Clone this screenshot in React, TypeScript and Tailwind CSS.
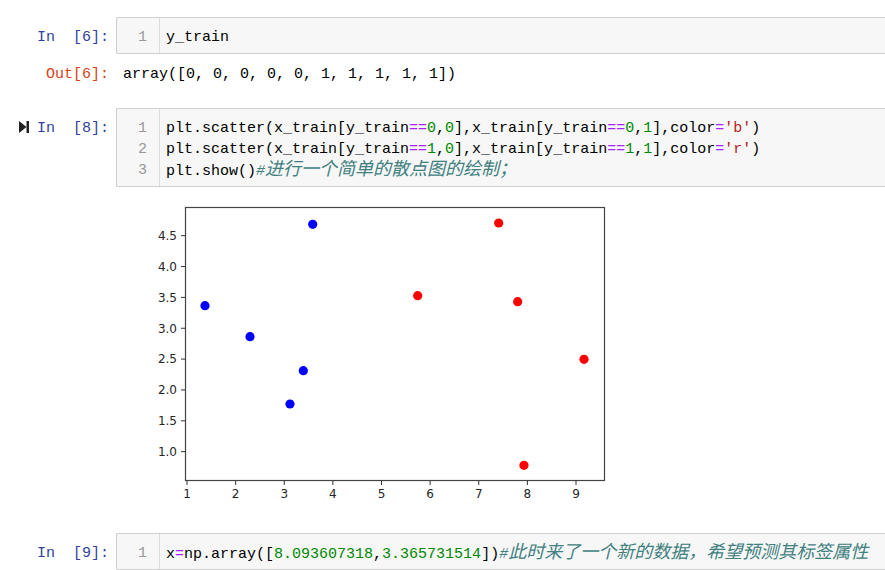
import React from 'react';

// token colours used by the notebook's code highlighter
const OP = 'text-[#aa22ff]';
const NUM = 'text-[#008800]';
const STR = 'text-[#ba2121]';

type Tok = [string, string?];

const Code: React.FC<{ toks: Tok[]; comment?: string }> = ({ toks, comment }) => (
  <div className="h-[21px] leading-[21px] whitespace-pre">
    {toks.map(([t, c], i) => (
      <span key={i} className={c}>{t}</span>
    ))}
    {comment && (
      <span className="italic text-[#408080]">
        #<span className="text-[18px] leading-[21px]">{comment}</span>
      </span>
    )}
  </div>
);

const Prompt: React.FC<{ label: string; out?: boolean; running?: boolean }> = ({ label, out, running }) => (
  <div className="w-[116px] shrink-0 flex items-start pr-[7px]">
    {running && (
      <svg width="12" height="14" viewBox="0 0 12 14" className="ml-[18px] mt-[2px]">
        <path d="M1 1 L8.5 7 L1 13 Z" fill="#222" />
        <rect x="8.5" y="1" width="2.5" height="12" fill="#222" />
      </svg>
    )}
    <span className={`ml-auto h-[21px] leading-[21px] whitespace-pre ${out ? 'text-[#d84315]' : 'text-[#303f9f]'}`}>
      {label}
    </span>
  </div>
);

const CodeCell: React.FC<{ n: number; lines: { toks: Tok[]; comment?: string }[]; running?: boolean }> = ({ n, lines, running }) => (
  <div className="flex">
    <div className="pt-[10px] flex">
      <Prompt label={`In  [${n}]:`} running={running} />
    </div>
    <div className="flex flex-1 border border-r-0 border-[#cfcfcf] bg-[#f7f7f7] rounded-l-[2px]">
      <div className="w-[43px] shrink-0 border-r border-[#dddddd] pt-[9px] pb-[5px] pr-[12px] text-right text-[#999999]">
        {lines.map((_, i) => (
          <div key={i} className="h-[21px] leading-[21px]">{i + 1}</div>
        ))}
      </div>
      <div className="pt-[9px] pb-[5px] pl-[6px] text-black">
        {lines.map((l, i) => (
          <Code key={i} toks={l.toks} comment={l.comment} />
        ))}
      </div>
    </div>
  </div>
);

// scatter data read off the figure
const blue = [
  [1.37, 3.366], [2.296, 2.863], [3.392, 2.312], [3.118, 1.772], [3.585, 4.685],
];
const red = [
  [5.744, 3.528], [7.41, 4.706], [7.8, 3.43], [9.165, 2.497], [7.93, 0.779],
];

const px = (v: number) => 47 + (v - 1) * 48.625;
const py = (v: number) => 35.7 + (4.5 - v) * 61.7;

const Scatter: React.FC = () => {
  const xt = [1, 2, 3, 4, 5, 6, 7, 8, 9];
  const yt = [1.0, 1.5, 2.0, 2.5, 3.0, 3.5, 4.0, 4.5];
  return (
    <svg width="480" height="300" viewBox="0 0 480 300" className="block">
      <rect x="0" y="0" width="480" height="300" fill="#fff" />
      {blue.map(([x, y], i) => (
        <circle key={`b${i}`} cx={px(x)} cy={py(y)} r="4.6" fill="#0000ff" />
      ))}
      {red.map(([x, y], i) => (
        <circle key={`r${i}`} cx={px(x)} cy={py(y)} r="4.6" fill="#ff0000" />
      ))}
      <rect x="45.5" y="7.5" width="419" height="273" fill="none" stroke="#444" strokeWidth="1.2" />
      <g fontFamily="'DejaVu Sans', sans-serif" fontSize="12" fill="#262626">
        {xt.map(v => (
          <g key={`x${v}`}>
            <line x1={px(v)} x2={px(v)} y1="280.5" y2="285" stroke="#333" strokeWidth="1" />
            <text x={px(v)} y="298" textAnchor="middle">{v}</text>
          </g>
        ))}
        {yt.map(v => (
          <g key={`y${v}`}>
            <line x1="41" x2="45.5" y1={py(v)} y2={py(v)} stroke="#333" strokeWidth="1" />
            <text x="37" y={py(v) + 4.3} textAnchor="end">{v.toFixed(1)}</text>
          </g>
        ))}
      </g>
    </svg>
  );
};

export default function App() {
  return (
    <div className="w-[885px] h-[570px] overflow-hidden bg-white text-[15px] font-['Liberation_Mono','Noto_Sans_CJK_SC',monospace]">
      <div className="pt-[17px]">
        <CodeCell n={6} lines={[{ toks: [['y_train']] }]} />

        <div className="flex mt-[10px]">
          <Prompt label="Out[6]:" out />
          <div className="pl-[7px] h-[21px] leading-[21px] whitespace-pre text-black">
            array([0, 0, 0, 0, 0, 1, 1, 1, 1, 1])
          </div>
        </div>

        <div className="mt-[23px]">
          <CodeCell
            n={8}
            running
            lines={[
              {
                toks: [
                  ['plt.scatter(x_train[y_train'], ['==', OP], ['0', NUM], [','], ['0', NUM],
                  ['],x_train[y_train'], ['==', OP], ['0', NUM], [','], ['1', NUM],
                  ['],color'], ['=', OP], ["'b'", STR], [')'],
                ],
              },
              {
                toks: [
                  ['plt.scatter(x_train[y_train'], ['==', OP], ['1', NUM], [','], ['0', NUM],
                  ['],x_train[y_train'], ['==', OP], ['1', NUM], [','], ['1', NUM],
                  ['],color'], ['=', OP], ["'r'", STR], [')'],
                ],
              },
              { toks: [['plt.show()']], comment: '进行一个简单的散点图的绘制；' },
            ]}
          />
        </div>

        <div className="mt-[13px] pl-[140px]">
          <Scatter />
        </div>

        <div className="mt-[33px]">
          <CodeCell
            n={9}
            lines={[
              {
                toks: [
                  ['x'], ['=', OP], ['np.array(['], ['8.093607318', NUM], [','], ['3.365731514', NUM], ['])'],
                ],
                comment: '此时来了一个新的数据，希望预测其标签属性',
              },
            ]}
          />
        </div>
      </div>
    </div>
  );
}
